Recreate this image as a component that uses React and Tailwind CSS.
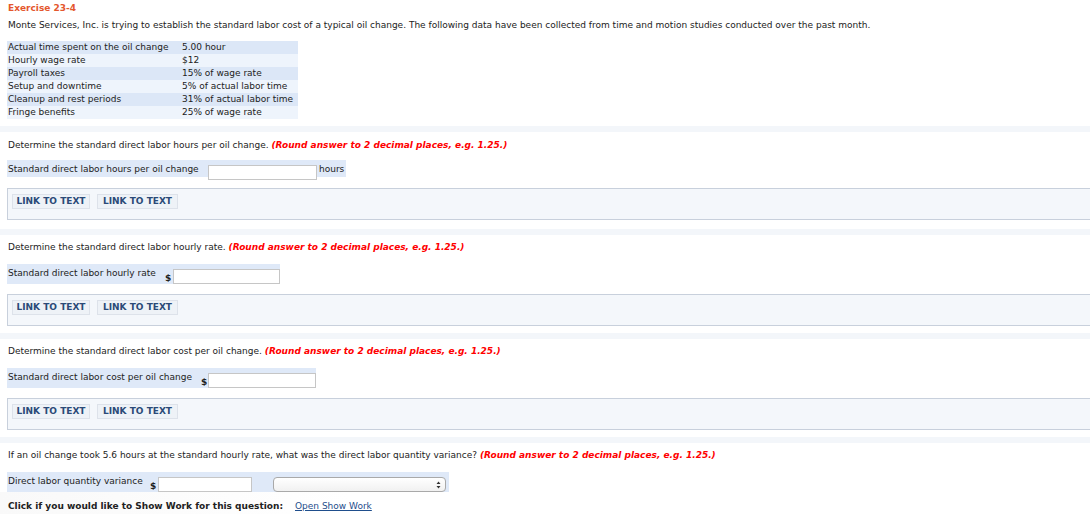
import React from "react";

const rows = [
  ["Actual time spent on the oil change", "5.00 hour"],
  ["Hourly wage rate", "$12"],
  ["Payroll taxes", "15% of wage rate"],
  ["Setup and downtime", "5% of actual labor time"],
  ["Cleanup and rest periods", "31% of actual labor time"],
  ["Fringe benefits", "25% of wage rate"],
];

function Hint() {
  return (
    <span className="font-bold italic text-[#ff0000]">
      (Round answer to 2 decimal places, e.g. 1.25.)
    </span>
  );
}

function LinkBox() {
  return (
    <div className="ml-[7px] h-[32px] border-y border-l border-[#c8d0dc] bg-[#f4f7fb] pl-[4px] pt-[5px] flex gap-[7px]">
      {["w-[78px]", "w-[81px]"].map((w, i) => (
        <button
          key={i}
          className={`${w} h-[15px] border border-[#dde2ea] bg-[#eef2f7] text-[9px] font-bold text-[#2b4a78] leading-[13px]`}
        >
          LINK TO TEXT
        </button>
      ))}
    </div>
  );
}

function Band() {
  return <div className="h-[6px] bg-[#f3f6fa]" />;
}

function Field({ w }) {
  return <div className={`${w} shrink-0 h-[15px] border border-[#c6c6c6] bg-white`} />;
}

export default function App() {
  return (
    <div className="w-[1090px] h-[514px] overflow-hidden bg-white text-[9px] text-[#222] leading-[13px]" style={{ fontFamily: '"DejaVu Sans", Verdana, sans-serif' }}>
      <div className="pl-[8px] pt-[2px]">
        <div className="text-[9px] font-bold text-[#e4572e]">Exercise 23-4</div>
        <div className="mt-[4px]">
          Monte Services, Inc. is trying to establish the standard labor cost of a typical oil change. The following data have been collected from time and motion studies conducted over the past month.
        </div>
      </div>

      <div className="ml-[7px] mt-[9px] w-[291px]">
        {rows.map(([a, b], i) => (
          <div key={i} className={`flex h-[13px] ${i % 2 === 0 ? "bg-[#dce7f7]" : "bg-[#eef4fc]"}`}>
            <div className="w-[175px] pl-[1px]">{a}</div>
            <div>{b}</div>
          </div>
        ))}
      </div>

      <div className="mt-[7px]">
        <Band />
      </div>

      {/* Section 1 */}
      <div className="pl-[8px] pt-[7px]">
        Determine the standard direct labor hours per oil change. <Hint />
      </div>
      <div className="ml-[7px] mt-[8px] w-fit pr-[2px] h-[17px] bg-[#dfe9f8] flex whitespace-nowrap">
        <div className="shrink-0 pt-[3px] pl-[1px] w-[201px]">Standard direct labor hours per oil change</div>
        <div className="mt-[5px]">
          <Field w="w-[109px]" />
        </div>
        <div className="pt-[3px] pl-[2px]">hours</div>
      </div>
      <div className="mt-[11px]">
        <LinkBox />
      </div>

      {/* Section 2 */}
      <div className="mt-[9px]">
        <Band />
      </div>
      <div className="pl-[8px] pt-[6px]">
        Determine the standard direct labor hourly rate. <Hint />
      </div>
      <div className="ml-[7px] mt-[10px] w-fit h-[20px] bg-[#dfe9f8] flex whitespace-nowrap">
        <div className="shrink-0 pt-[3px] pl-[1px] w-[158px]">Standard direct labor hourly rate</div>
        <div className="shrink-0 pt-[8px] font-bold w-[8px]">$</div>
        <div className="mt-[5px]">
          <Field w="w-[107px]" />
        </div>
      </div>
      <div className="mt-[10px]">
        <LinkBox />
      </div>

      {/* Section 3 */}
      <div className="mt-[7px]">
        <Band />
      </div>
      <div className="pl-[8px] pt-[6px]">
        Determine the standard direct labor cost per oil change. <Hint />
      </div>
      <div className="ml-[7px] mt-[10px] w-fit h-[20px] bg-[#dfe9f8] flex whitespace-nowrap">
        <div className="shrink-0 pt-[3px] pl-[1px] w-[194px]">Standard direct labor cost per oil change</div>
        <div className="shrink-0 pt-[8px] font-bold w-[7px]">$</div>
        <div className="mt-[5px]">
          <Field w="w-[108px]" />
        </div>
      </div>
      <div className="mt-[10px]">
        <LinkBox />
      </div>

      {/* Section 4 */}
      <div className="mt-[7px]">
        <Band />
      </div>
      <div className="pl-[8px] pt-[6px]">
        If an oil change took 5.6 hours at the standard hourly rate, what was the direct labor quantity variance? <Hint />
      </div>
      <div className="ml-[7px] mt-[10px] w-fit pr-[3px] h-[20px] bg-[#dfe9f8] flex whitespace-nowrap">
        <div className="shrink-0 pt-[3px] pl-[1px] w-[143px]">Direct labor quantity variance</div>
        <div className="shrink-0 pt-[8px] font-bold w-[8px]">$</div>
        <div className="mt-[5px]">
          <Field w="w-[94px]" />
        </div>
        <div className="shrink-0 mt-[5px] ml-[21px] w-[173px] h-[15px] rounded-[4px] border border-[#a9a9a9] bg-gradient-to-b from-white to-[#f1f1f1] flex items-center justify-end pr-[4px]">
          <svg width="5" height="8" viewBox="0 0 5 8">
            <path d="M0.5 3 L2.5 0.5 L4.5 3 Z M0.5 5 L2.5 7.5 L4.5 5 Z" fill="#333" />
          </svg>
        </div>
      </div>
      <div className="pl-[8px] pt-[8px] h-[24px] bg-gradient-to-r from-[#f9f9f9] via-white to-white w-[700px]">
        <span className="font-bold">Click if you would like to Show Work for this question:</span>
        <span className="ml-[12px] text-[#1f4e8c] underline">Open Show Work</span>
      </div>
    </div>
  );
}
